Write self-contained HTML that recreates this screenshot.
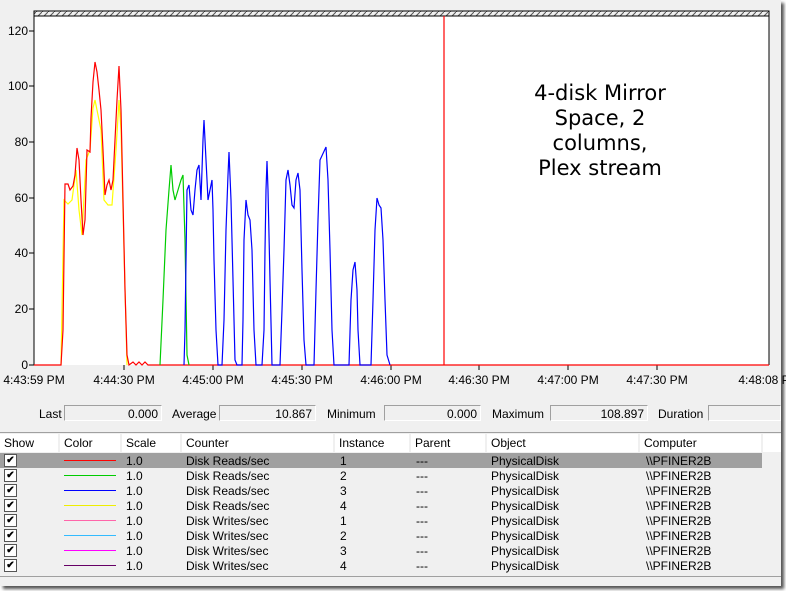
<!DOCTYPE html>
<html><head><meta charset="utf-8"><style>
body{margin:0;width:786px;height:591px;background:#fff;font-family:"Liberation Sans",sans-serif;overflow:hidden;position:relative}
#win{position:absolute;left:0;top:0;width:781px;height:586px;background:#f0f0f0;box-shadow:3px 3px 3px #555}
.t{position:absolute;font-size:12px;color:#000;white-space:nowrap}
.box{position:absolute;height:16px;border:1px solid #a0a0a0;border-right-color:#fff;border-bottom-color:#fff;background:#f0f0f0;font-size:12px;text-align:right;line-height:16px;box-sizing:border-box;padding-right:3px}
.hd{position:absolute;top:434px;height:18px;background:#fff;font-size:12px;line-height:19px;padding-left:4px;box-sizing:border-box;border-right:2px solid #f0f0f0}
.row{position:absolute;left:0;width:762px;height:15px;font-size:12px;line-height:16px}
.row span{position:absolute;top:0}
.cb{position:absolute;left:4px;top:1px;width:11px;height:11px;border:1px solid #555;background:#fff;font-size:10px;line-height:11px;text-align:center;font-weight:bold}
.ln{position:absolute;left:64px;top:7px;width:52px;height:1px}
</style></head><body><div id="win">
<svg width="786" height="430" style="position:absolute;left:0;top:0" font-family="Liberation Sans" font-size="12">
<defs><pattern id="h" width="6" height="6" patternUnits="userSpaceOnUse"><path d="M0,6 L6,0" stroke="#555" stroke-width="1"/></pattern></defs>
<rect x="34" y="11" width="735" height="5" fill="url(#h)" stroke="#000"/>
<rect x="34" y="16" width="735" height="349" fill="#fff"/>
<line x1="34" y1="16" x2="769" y2="16" stroke="#000"/>
<line x1="34" y1="11" x2="34" y2="365" stroke="#000"/>
<line x1="769" y1="11" x2="769" y2="365" stroke="#000"/>
<g stroke="#000">
<line x1="29" y1="31" x2="34" y2="31"/><line x1="29" y1="86" x2="34" y2="86"/><line x1="29" y1="142" x2="34" y2="142"/><line x1="29" y1="198" x2="34" y2="198"/><line x1="29" y1="253" x2="34" y2="253"/><line x1="29" y1="309" x2="34" y2="309"/><line x1="29" y1="365" x2="34" y2="365"/>
<line x1="124" y1="365" x2="124" y2="370"/><line x1="213" y1="365" x2="213" y2="370"/><line x1="302" y1="365" x2="302" y2="370"/><line x1="391" y1="365" x2="391" y2="370"/><line x1="479" y1="365" x2="479" y2="370"/><line x1="568" y1="365" x2="568" y2="370"/><line x1="657" y1="365" x2="657" y2="370"/>
</g>
<g text-anchor="end"><text x="28" y="35">120</text><text x="28" y="90">100</text><text x="28" y="146">80</text><text x="28" y="202">60</text><text x="28" y="257">40</text><text x="28" y="313">20</text><text x="28" y="369">0</text></g>
<g text-anchor="middle"><text x="34" y="384">4:43:59 PM</text><text x="124" y="384">4:44:30 PM</text><text x="213" y="384">4:45:00 PM</text><text x="302" y="384">4:45:30 PM</text><text x="391" y="384">4:46:00 PM</text><text x="479" y="384">4:46:30 PM</text><text x="568" y="384">4:47:00 PM</text><text x="657" y="384">4:47:30 PM</text><text x="769" y="384">4:48:08 PM</text></g>
<g fill="none" stroke-width="1.2">
<path stroke="#ff0" d="M61,365 L64,200 L68,204 L72,200 L76,170 L79,210 L82,235 L86,160 L90,150 L93,108 L95,100 L97,110 L101,130 L104,200 L108,205 L112,205 L116,150 L119,100 L121,130 L124,250 L127,365"/>
<path stroke="#f00" d="M34,365 L61,365 L63,330 L65,184 L68,184 L70,190 L73,186 L75,175 L77,148 L79,160 L81,200 L83,235 L85,220 L87,150 L90,152 L91,118 L93,82 L95,62 L97,72 L99,90 L101,110 L103,150 L105,195 L107,185 L109,180 L111,190 L113,180 L115,140 L117,100 L119,66 L121,110 L123,200 L125,290 L127,355 L129,365 L133,362 L136,365 L139,362 L142,365 L145,362 L148,365 L769,365"/>
<path stroke="#0c0" d="M160,365 L163,300 L166,230 L169,190 L171,165 L173,190 L175,200 L178,190 L181,180 L183,175 L185,240 L187,355 L189,365"/>
<path stroke="#00f" d="M184,365 L185,330 L186,260 L187,190 L189,185 L191,210 L193,215 L195,190 L197,170 L199,165 L201,200 L203,140 L204,120 L206,160 L208,200 L210,190 L212,180 L213,210 L214,260 L216,330 L218,365 L222,365 L224,320 L226,230 L228,175 L229,152 L231,200 L233,280 L235,360 L237,365 L242,365 L243,320 L244,240 L246,200 L248,215 L250,220 L252,250 L254,330 L256,365 L262,365 L264,330 L265,250 L266,190 L267,161 L268,190 L270,280 L272,365 L280,365 L282,310 L284,250 L286,180 L288,170 L290,185 L292,205 L294,208 L296,180 L298,173 L300,190 L302,270 L304,340 L306,365 L314,365 L316,290 L318,220 L320,160 L326,147 L328,180 L330,250 L332,330 L334,365 L349,365 L351,300 L353,270 L355,262 L357,290 L358,330 L360,365 L371,365 L373,300 L375,230 L377,198 L379,205 L381,208 L383,240 L385,300 L387,355 L390,365"/>
<path stroke="#f00" d="M444,16 L444,365"/>
</g>
<g font-family="DejaVu Sans" font-size="21" text-anchor="middle" fill="#000"><text x="600" y="100">4-disk Mirror</text><text x="600" y="125">Space, 2</text><text x="600" y="150">columns,</text><text x="600" y="175">Plex stream</text></g>
</svg>
<span class="t" style="left:39px;top:407px">Last</span><div class="box" style="left:64px;top:405px;width:98px">0.000</div>
<span class="t" style="left:172px;top:407px">Average</span><div class="box" style="left:219px;top:405px;width:97px">10.867</div>
<span class="t" style="left:327px;top:407px">Minimum</span><div class="box" style="left:384px;top:405px;width:97px">0.000</div>
<span class="t" style="left:492px;top:407px">Maximum</span><div class="box" style="left:550px;top:405px;width:98px">108.897</div>
<span class="t" style="left:658px;top:407px">Duration</span><div class="box" style="left:708px;top:405px;width:73px"></div>
<div style="position:absolute;left:0;top:432px;width:781px;height:1px;background:#a0a0a0"></div>
<div class="hd" style="left:0;width:60px">Show</div><div class="hd" style="left:60px;width:62px">Color</div><div class="hd" style="left:122px;width:60px">Scale</div><div class="hd" style="left:182px;width:153px">Counter</div><div class="hd" style="left:335px;width:76px">Instance</div><div class="hd" style="left:411px;width:76px">Parent</div><div class="hd" style="left:487px;width:153px">Object</div><div class="hd" style="left:640px;width:123px">Computer</div><div class="hd" style="left:763px;width:18px;border:none"></div>
<div class="row" style="top:453px;background:#a0a0a0"><div class="cb">✔</div><div class="ln" style="background:#f00"></div><span style="left:126px">1.0</span><span style="left:186px">Disk Reads/sec</span><span style="left:340px">1</span><span style="left:416px">---</span><span style="left:491px">PhysicalDisk</span><span style="left:646px">\\PFINER2B</span></div>
<div class="row" style="top:468px"><div class="cb">✔</div><div class="ln" style="background:#0c0"></div><span style="left:126px">1.0</span><span style="left:186px">Disk Reads/sec</span><span style="left:340px">2</span><span style="left:416px">---</span><span style="left:491px">PhysicalDisk</span><span style="left:646px">\\PFINER2B</span></div>
<div class="row" style="top:483px"><div class="cb">✔</div><div class="ln" style="background:#00f"></div><span style="left:126px">1.0</span><span style="left:186px">Disk Reads/sec</span><span style="left:340px">3</span><span style="left:416px">---</span><span style="left:491px">PhysicalDisk</span><span style="left:646px">\\PFINER2B</span></div>
<div class="row" style="top:498px"><div class="cb">✔</div><div class="ln" style="background:#ee0"></div><span style="left:126px">1.0</span><span style="left:186px">Disk Reads/sec</span><span style="left:340px">4</span><span style="left:416px">---</span><span style="left:491px">PhysicalDisk</span><span style="left:646px">\\PFINER2B</span></div>
<div class="row" style="top:513px"><div class="cb">✔</div><div class="ln" style="background:#f6a"></div><span style="left:126px">1.0</span><span style="left:186px">Disk Writes/sec</span><span style="left:340px">1</span><span style="left:416px">---</span><span style="left:491px">PhysicalDisk</span><span style="left:646px">\\PFINER2B</span></div>
<div class="row" style="top:528px"><div class="cb">✔</div><div class="ln" style="background:#3bf"></div><span style="left:126px">1.0</span><span style="left:186px">Disk Writes/sec</span><span style="left:340px">2</span><span style="left:416px">---</span><span style="left:491px">PhysicalDisk</span><span style="left:646px">\\PFINER2B</span></div>
<div class="row" style="top:543px"><div class="cb">✔</div><div class="ln" style="background:#f0f"></div><span style="left:126px">1.0</span><span style="left:186px">Disk Writes/sec</span><span style="left:340px">3</span><span style="left:416px">---</span><span style="left:491px">PhysicalDisk</span><span style="left:646px">\\PFINER2B</span></div>
<div class="row" style="top:558px"><div class="cb">✔</div><div class="ln" style="background:#606"></div><span style="left:126px">1.0</span><span style="left:186px">Disk Writes/sec</span><span style="left:340px">4</span><span style="left:416px">---</span><span style="left:491px">PhysicalDisk</span><span style="left:646px">\\PFINER2B</span></div>
<div style="position:absolute;left:0;top:576px;width:781px;height:1px;background:#a0a0a0"></div>
</div></body></html>
